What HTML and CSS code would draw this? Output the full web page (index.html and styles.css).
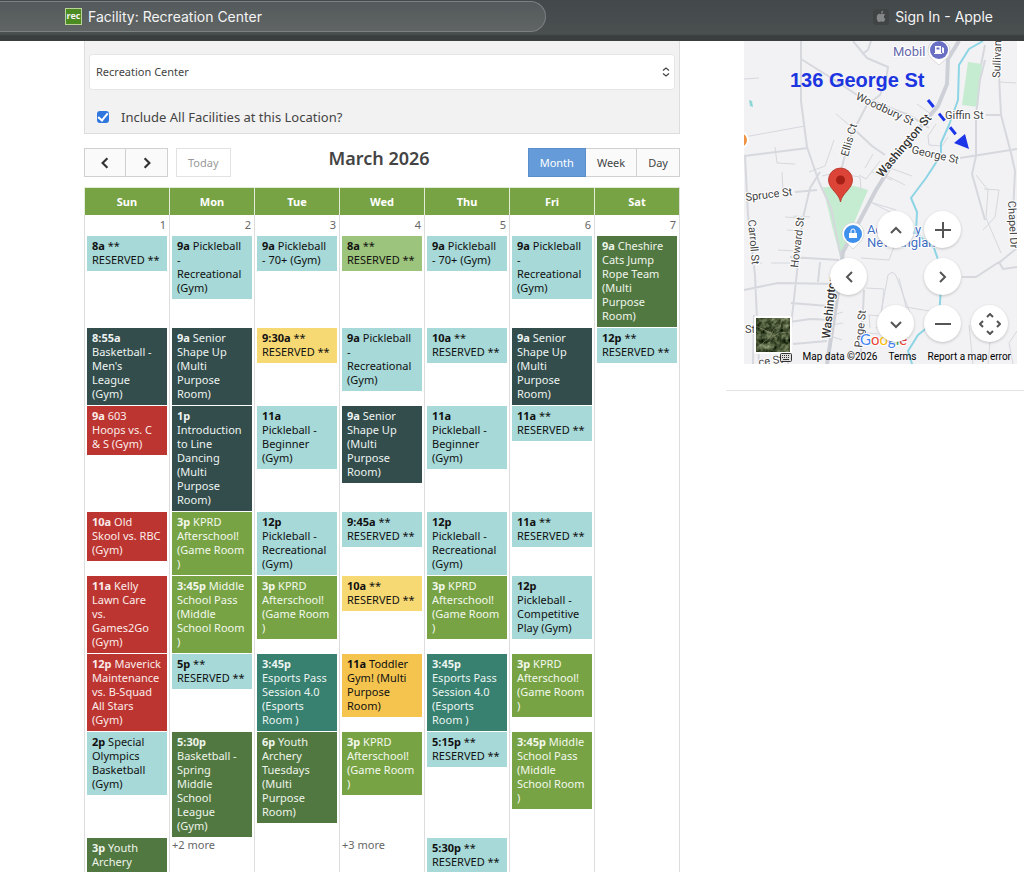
FILE: index.html
```html
<!DOCTYPE html>
<html lang="en">
<head>
<meta charset="utf-8">
<title>Facility: Recreation Center</title>
<link rel="stylesheet" href="styles.css">
</head>
<body>
<header class="browser-bar">
  <a class="tab tab-active" href="#facility"><span class="favicon">rec</span>Facility: Recreation Center</a>
  <a class="tab tab-other" href="#signin"><svg class="apple" viewBox="0 0 16 16" aria-hidden="true"><rect width="16" height="16" rx="3" fill="#414445"/><path d="M8 5.300c.7-.5 1.500-.7 2.300-.5.700.1 1.300.5 1.700 1-1.700 1.200-1.500 3.500.4 4.300-.6 1.700-1.500 2.900-2.400 2.900-.7 0-1-.4-1.900-.4s-1.200.4-1.900.4C4.800 13 3.700 10.900 3.700 8.700c0-2.500 1.300-3.900 2.700-3.900.700 0 1.200.3 1.600.5zM7.900 4.500c0-1.500 1-2.500 2.300-2.700.1 1.500-.9 2.700-2.300 2.700z" fill="#858788"/></svg>Sign In - Apple</a>
</header>
<main class="page">
  <section class="content">
    <form class="filters">
      <div class="select-box">
        <select aria-label="Facility"><option>Recreation Center</option></select>
        <svg class="updown" viewBox="0 0 8 10" aria-hidden="true"><path d="M1 3.500 4 1l3 2.500M1 6.500 4 9l3-2.500" fill="none" stroke="#444" stroke-width="1.200"/></svg>
      </div>
      <label class="include"><input type="checkbox" checked>Include All Facilities at this Location?</label>
    </form>
    <div class="toolbar">
      <div class="tools">
        <div class="group">
          <button type="button" class="btn arrow" aria-label="Previous"><svg viewBox="0 0 10 10"><path d="M7 1 3 5l4 4" fill="none" stroke="#333" stroke-width="1.800"/></svg></button>
          <button type="button" class="btn arrow" aria-label="Next"><svg viewBox="0 0 10 10"><path d="m3 1 4 4-4 4" fill="none" stroke="#333" stroke-width="1.800"/></svg></button>
        </div>
        <button type="button" class="btn today" disabled>Today</button>
      </div>
      <h2 class="title">March 2026</h2>
      <div class="group">
        <button type="button" class="btn selected">Month</button>
        <button type="button" class="btn">Week</button>
        <button type="button" class="btn">Day</button>
      </div>
    </div>
    <table class="calendar">
      <thead>
        <tr><th>Sun</th><th>Mon</th><th>Tue</th><th>Wed</th><th>Thu</th><th>Fri</th><th>Sat</th></tr>
      </thead>
      <tbody>
        <tr class="days"><td>1</td><td>2</td><td>3</td><td>4</td><td>5</td><td>6</td><td>7</td></tr>
        <tr>
          <td><a href="#e" class="event aqua"><b>8a</b> ** RESERVED **</a></td>
          <td><a href="#e" class="event aqua"><b>9a</b> Pickleball<br>-<br>Recreational (Gym)</a></td>
          <td><a href="#e" class="event aqua"><b>9a</b> Pickleball<br>- 70+ (Gym)</a></td>
          <td><a href="#e" class="event sage"><b>8a</b> ** RESERVED **</a></td>
          <td><a href="#e" class="event aqua"><b>9a</b> Pickleball<br>- 70+ (Gym)</a></td>
          <td><a href="#e" class="event aqua"><b>9a</b> Pickleball<br>-<br>Recreational (Gym)</a></td>
          <td><a href="#e" class="event forest"><b>9a</b> Cheshire Cats Jump Rope Team (Multi Purpose Room)</a></td>
        </tr>
        <tr>
          <td><a href="#e" class="event slate"><b>8:55a</b> Basketball - Men's League (Gym)</a></td>
          <td><a href="#e" class="event slate"><b>9a</b> Senior Shape Up (Multi Purpose Room)</a></td>
          <td><a href="#e" class="event yellow"><b>9:30a</b> ** RESERVED **</a></td>
          <td><a href="#e" class="event aqua"><b>9a</b> Pickleball<br>-<br>Recreational (Gym)</a></td>
          <td><a href="#e" class="event aqua"><b>10a</b> ** RESERVED **</a></td>
          <td><a href="#e" class="event slate"><b>9a</b> Senior Shape Up (Multi Purpose Room)</a></td>
          <td><a href="#e" class="event aqua"><b>12p</b> ** RESERVED **</a></td>
        </tr>
        <tr>
          <td><a href="#e" class="event red"><b>9a</b> 603<br>Hoops vs. C<br>&amp; S (Gym)</a></td>
          <td><a href="#e" class="event slate"><b>1p</b><br>Introduction to Line Dancing (Multi Purpose Room)</a></td>
          <td><a href="#e" class="event aqua"><b>11a</b><br>Pickleball - Beginner (Gym)</a></td>
          <td><a href="#e" class="event slate"><b>9a</b> Senior Shape Up (Multi Purpose Room)</a></td>
          <td><a href="#e" class="event aqua"><b>11a</b><br>Pickleball - Beginner (Gym)</a></td>
          <td><a href="#e" class="event aqua"><b>11a</b> ** RESERVED **</a></td>
          <td></td>
        </tr>
        <tr>
          <td><a href="#e" class="event red"><b>10a</b> Old Skool vs. RBC (Gym)</a></td>
          <td><a href="#e" class="event green"><b>3p</b> KPRD Afterschool! (Game Room )</a></td>
          <td><a href="#e" class="event aqua"><b>12p</b><br>Pickleball - Recreational (Gym)</a></td>
          <td><a href="#e" class="event aqua"><b>9:45a</b> ** RESERVED **</a></td>
          <td><a href="#e" class="event aqua"><b>12p</b><br>Pickleball - Recreational (Gym)</a></td>
          <td><a href="#e" class="event aqua"><b>11a</b> ** RESERVED **</a></td>
          <td></td>
        </tr>
        <tr>
          <td><a href="#e" class="event red"><b>11a</b> Kelly Lawn Care<br>vs.<br>Games2Go (Gym)</a></td>
          <td><a href="#e" class="event green"><b>3:45p</b> Middle School Pass (Middle School Room )</a></td>
          <td><a href="#e" class="event green"><b>3p</b> KPRD Afterschool! (Game Room )</a></td>
          <td><a href="#e" class="event yellow"><b>10a</b> ** RESERVED **</a></td>
          <td><a href="#e" class="event green"><b>3p</b> KPRD Afterschool! (Game Room )</a></td>
          <td><a href="#e" class="event aqua"><b>12p</b><br>Pickleball - Competitive Play (Gym)</a></td>
          <td></td>
        </tr>
        <tr>
          <td><a href="#e" class="event red"><b>12p</b> Maverick Maintenance vs. B-Squad All Stars (Gym)</a></td>
          <td><a href="#e" class="event aqua"><b>5p</b> ** RESERVED **</a></td>
          <td><a href="#e" class="event teal"><b>3:45p</b><br>Esports Pass Session 4.0 (Esports Room )</a></td>
          <td><a href="#e" class="event amber"><b>11a</b> Toddler Gym! (Multi Purpose Room)</a></td>
          <td><a href="#e" class="event teal"><b>3:45p</b><br>Esports Pass Session 4.0 (Esports Room )</a></td>
          <td><a href="#e" class="event green"><b>3p</b> KPRD Afterschool! (Game Room )</a></td>
          <td></td>
        </tr>
        <tr>
          <td><a href="#e" class="event aqua"><b>2p</b> Special Olympics Basketball (Gym)</a></td>
          <td><a href="#e" class="event forest"><b>5:30p</b> Basketball - Spring Middle School League (Gym)</a></td>
          <td><a href="#e" class="event forest"><b>6p</b> Youth Archery Tuesdays (Multi Purpose Room)</a></td>
          <td><a href="#e" class="event green"><b>3p</b> KPRD Afterschool! (Game Room )</a></td>
          <td><a href="#e" class="event aqua"><b>5:15p</b> ** RESERVED **</a></td>
          <td><a href="#e" class="event green"><b>3:45p</b> Middle School Pass (Middle School Room )</a></td>
          <td></td>
        </tr>
        <tr>
          <td><a href="#e" class="event forest"><b>3p</b> Youth Archery</a></td>
          <td><a href="#more" class="more">+2 more</a></td>
          <td></td>
          <td><a href="#more" class="more">+3 more</a></td>
          <td><a href="#e" class="event aqua"><b>5:30p</b> ** RESERVED **</a></td>
          <td></td>
          <td></td>
        </tr>
      </tbody>
    </table>
  </section>
  <aside class="side">
    <div class="map">
      <svg class="map-art" viewBox="744 41 273 323" preserveAspectRatio="xMidYMid slice" role="img" aria-label="Street map around 136 George St">
        <defs>
          <filter id="terrain" x="0" y="0" width="100%" height="100%" color-interpolation-filters="sRGB">
            <feTurbulence type="fractalNoise" baseFrequency=".18" numOctaves="4" seed="8"/>
            <feColorMatrix values=".8 .2 0 0 -.22  .8 .2 0 0 -.17  .7 .2 0 0 -.24  0 0 0 0 1"/>
          </filter>
        </defs>
        <rect x="744" y="41" width="273" height="323" fill="#f2f2f4"/>
        <g fill="#c5ecd0">
          <path d="M823 187q8 1 14-3 14 0 31 6l-28 66-8-30z"/>
          <path d="m968 62 14 2-4 43-16-2z"/>
          <path d="m749 100 3 1 1 6-3-1z" fill="#8ed7d5"/>
        </g>
        <g class="road thin">
          <path d="m744 79 15-1M744 137l61-11M775 147l2 16 18 1M834 140l-9 26-16 6M836 114l19 16M880 161l-14 18-7-4M873 154l-8 14M872 172l20 8M882 165l30 11M870 202l26 8M887 176l18 9M917 104l14 10M936 124l-8 12 1 9 13 1 6-9M976 175l12 15-2 28 15 35M984 189l15 1-4 27-12 13M1000 82l16 1M822 176l12-3 26 4 1 14M783 192l-1-20M793 216l17 1M778 250l17 1M771 263h19M755 264l7-1M868 201l24 12 2 34-5 13-28-2M866 288l18 1-3 27-12-1 1 13M881 315l22 1M881 313l7-38q6-6 9 3l13 35-34 15M899 278l7 29 29 5M860 332l18 2M833 315l10-3M832 325l11-2M830 336l12 4M969 325l4 39M990 342l-2 22M1017 331l-8 12 4 21M785 217l14 1M787 230l14 1"/>
        </g>
        <g class="road">
          <path d="M801 41v18l0 42 6 46 12 35 12 26 10 49M801 59l32 20 24 16 54 21 18 12M853 41l14 17 21 9-2 13-6 15-13 10-18 34-8 32M871 41l-3 9-6 4M855 130l17 16 13 9M744 156l64-8M745 155l3 60 7 60 4 89M820 172l-10 16-8 34-5 50-5 45-4 47M744 290l34-7 63 1M791 303l37 3M790 322l20-3 23 1M754 315l-1 49M793 344l34-3M790 257l49 3M795 192l22-2M864 290l-3 62M976 156l-4 18 13 46M960 158l57-9M985 60l-5 20-4 35v41M986 115h14M985 45l-4 20M998 41l1 34 2 40 10 38 4 18-2 42M962 277h14l23-15 4 7 14-2M1000 262l17-14M820 262l-2 20"/>
        </g>
        <path class="road-main" d="M959 41l-11 18-1 25-9 22-37 44-25 40-33 62-5 40-11 72"/>
        <path class="creek" d="m983 41-14 8-10 16-1 35-9 25-8 18v12l-15 23-15 20 6 14-1 21 18 15 8 23-3 47-21 17-10 16 4 13-4 7"/>
        <g class="street">
          <text x="855" y="99" transform="rotate(25 855 99)">Woodbury St</text>
          <text x="848" y="157" transform="rotate(-74 848 157)">Ellis Ct</text>
          <text x="945" y="119">Giffin St</text>
          <text x="911" y="153" transform="rotate(13 911 153)">George St</text>
          <text x="746" y="201" transform="rotate(-7 746 201)">Spruce St</text>
          <text x="748" y="220" transform="rotate(85 748 220)">Carroll St</text>
          <text x="798" y="268" transform="rotate(-83 798 268)">Howard St</text>
          <text x="1000" y="78" transform="rotate(-88 1000 78)">Sullivan</text>
          <text x="1008" y="201" transform="rotate(87 1008 201)">Chapel Dr</text>
          <text x="862" y="348" transform="rotate(-84 862 348)">Page St</text>
          <text x="745" y="333">St</text>
          <text x="759" y="366" transform="rotate(-8 759 366)">ce St</text>
        </g>
        <g class="street avenue">
          <text x="882" y="178" transform="rotate(-50 882 178)">Washington St</text>
          <text x="830" y="339" transform="rotate(-84 830 339)">Washington</text>
        </g>
        <g class="place">
          <text x="893" y="56" fill="#6668ab">Mobil</text>
          <text x="867" y="234">Academy Sea</text>
          <text x="867" y="247">New England</text>
        </g>
        <path d="M939 65l-7-6a11 11 0 1 1 14 0z" fill="#fff" stroke="#bbb" stroke-width=".5"/>
        <circle cx="939" cy="50" r="9" fill="#6970c4"/>
        <path d="M935 46h6v7h1v1h-8v-1h1zM936.500 47.500v2h3v-2zM942 47l2 1v5q-2 1-2-2" fill="#fff" fill-rule="evenodd"/>
        <path d="m853 249-7-7a11 11 0 1 1 14 0z" fill="#fff" stroke="#bbb" stroke-width=".5"/>
        <circle cx="853" cy="234" r="9" fill="#3f8fec"/>
        <path d="M849 233h8v5h-8z" fill="#fff"/>
        <path d="M851 233v-2a2 2 0 0 1 4 0v2" fill="none" stroke="#fff"/>
        <circle cx="740" cy="140" r="8" fill="#ee9346" stroke="#fff" stroke-width="2"/>
        <path d="M840.500 202c-1.500-9-12-13-12-22a12 12 0 0 1 24 0c0 9-10.500 13-12 22z" fill="#db4437" stroke="#b33126" stroke-width=".8"/>
        <circle cx="840.500" cy="180" r="4.500" fill="#a51f17"/>
        <text class="callout" x="790" y="87">136 George St</text>
        <path d="m928 100 34 42" stroke="#1c35e8" stroke-width="3" stroke-dasharray="9 8.500"/>
        <path d="m969 149-15-6 11-9z" fill="#1c35e8"/>
        <text class="logo" x="860" y="345"><tspan fill="#4285f4">G</tspan><tspan fill="#ea4335">o</tspan><tspan fill="#fbbc05">o</tspan><tspan fill="#4285f4">g</tspan><tspan fill="#34a853">l</tspan><tspan fill="#ea4335">e</tspan></text>
        <rect x="754" y="316" width="38" height="38" rx="2" fill="#fff"/>
        <rect x="756" y="318" width="34" height="34" filter="url(#terrain)"/>
        <path d="m757 348 12-10 5-9 6-2 2-8M770 338l9-5 10-1M756 326l15 7" fill="none" stroke="#b9b79d" stroke-width=".8" opacity=".5"/>
      </svg>
      <div class="map-controls">
        <button type="button" class="round up" aria-label="Move up"><svg viewBox="0 0 18 18"><path d="m4 12 5-5 5 5"/></svg></button>
        <button type="button" class="round plus" aria-label="Zoom in"><svg viewBox="0 0 18 18"><path d="M9 1v16M1 9h16"/></svg></button>
        <button type="button" class="round left" aria-label="Move left"><svg viewBox="0 0 18 18"><path d="M12 4 7 9l5 5"/></svg></button>
        <button type="button" class="round right" aria-label="Move right"><svg viewBox="0 0 18 18"><path d="m6 4 5 5-5 5"/></svg></button>
        <button type="button" class="round down" aria-label="Move down"><svg viewBox="0 0 18 18"><path d="m4 7 5 5 5-5"/></svg></button>
        <button type="button" class="round minus" aria-label="Zoom out"><svg viewBox="0 0 18 18"><path d="M1 9h16"/></svg></button>
        <button type="button" class="round pan" aria-label="Map camera controls"><svg class="wide" viewBox="0 0 22 22"><path d="m8 4 3-3 3 3M8 18l3 3 3-3M4 8l-3 3 3 3M18 8l3 3-3 3"/></svg></button>
      </div>
      <div class="credits">
        <svg class="keyboard" viewBox="0 0 12 9" aria-hidden="true"><rect x=".5" y=".5" width="11" height="8" rx="1" fill="#ddd" stroke="#333"/><path d="M2 2.500h8M2 4.500h8" stroke="#333" stroke-dasharray="1 1"/><path d="M3 6.500h6" stroke="#333"/></svg>
        <span>Map data ©2026</span><a href="#terms">Terms</a><a href="#report">Report a map error</a>
      </div>
    </div>
  </aside>
</main>
</body>
</html>
```
FILE: styles.css
```css
* { box-sizing: border-box; }

body {
  margin: 0;
  height: 100vh;
  overflow: hidden;
  display: flex;
  flex-direction: column;
  background: #fff;
  color: #444;
  font-family: "Noto Sans", "Open Sans", sans-serif;
}

a { color: inherit; text-decoration: none; }
button, select { font-family: inherit; color: inherit; }

.browser-bar {
  flex: none;
  height: 41px;
  display: flex;
  justify-content: space-between;
  align-items: flex-start;
  padding-right: 31px;
  background: linear-gradient(#43494b, #4a4f50 34px, #3b3e3f 36px, #3b3e3f);
  color: #f4f4f4;
  font: 14px/20px Inter, sans-serif;
}
.tab { display: flex; align-items: center; gap: 6px; }
.tab-active {
  width: 546px;
  height: 31px;
  margin-top: 1px;
  padding-left: 65px;
  border: 1px solid #7c8182;
  border-left: 0;
  border-radius: 0 16px 16px 0;
  background: linear-gradient(#545a5c, #606464);
}
.tab-other { height: 33px; }
.favicon {
  width: 17px;
  height: 17px;
  border: 1px solid #b9d399;
  background: #4c8a22;
  font: bold 9px/13px "Open Sans", sans-serif;
  text-align: center;
}
.apple { width: 16px; height: 16px; }

.page {
  flex: 1;
  min-height: 0;
  display: grid;
  grid-template-columns: 2fr 1fr;
  align-items: start;
  column-gap: 46px;
  padding-left: 84px;
}

.filters {
  padding: 13px 4px 6px;
  border: 1px solid #ddd;
  border-top: 0;
  background: #f2f2f2;
}
.select-box { position: relative; }
.select-box select {
  display: block;
  appearance: none;
  width: 100%;
  height: 36px;
  padding: 0 6px 2px;
  border: 1px solid #e6e6e6;
  border-radius: 3px;
  background: #fff;
  font-size: 11px;
}
.updown {
  position: absolute;
  right: 5px;
  top: 13px;
  width: 8px;
  height: 10px;
}
.include {
  display: flex;
  align-items: center;
  gap: 12px;
  margin-top: 17px;
  padding-left: 8px;
  font-size: 13px;
  line-height: 20px;
}
.include input {
  appearance: none;
  display: grid;
  place-items: center;
  width: 12px;
  height: 12px;
  margin: 0;
  border-radius: 3px;
  background: #2f76de;
}
.include input:not(:checked) { background: #fff; border: 1px solid #999; }
.include input:checked::after {
  content: "";
  width: 4px;
  height: 8px;
  margin-bottom: 2px;
  border: solid #fff;
  border-width: 0 2px 2px 0;
  transform: rotate(40deg);
}

.toolbar {
  display: flex;
  justify-content: space-between;
  margin: 14px 0 10px;
}
.tools { display: flex; gap: 8px; }
.group { display: flex; }
.group .btn + .btn { border-left: 0; }
.btn {
  height: 29px;
  padding: 0 11px;
  border: 1px solid #d0d0d0;
  background: #fafafa;
  font-size: 11px;
}
.arrow { width: 42px; }
.arrow svg { width: 12px; height: 12px; display: block; margin: auto; }
.today { background: #fff; border-color: #e2e2e2; color: #999; }
.selected { border-color: #5a8fcb; background: #659bd8; color: #fff; }
.title { margin: 0; font-size: 18px; line-height: 20px; font-weight: 600; }

.calendar {
  width: 100%;
  table-layout: fixed;
  border-collapse: separate;
  border-spacing: 0;
  border-right: 1px solid #ddd;
}
.calendar th {
  height: 28px;
  padding: 0;
  border: solid #e3ecd9;
  border-width: 1px 0 0 1px;
  background: #77a345;
  color: #fff;
  font-size: 11px;
}
.calendar td {
  padding: 0 2px 1px;
  border-left: 1px solid #ddd;
  vertical-align: top;
}
.calendar .days td {
  height: 21px;
  padding: 1px 3px 0 0;
  font-size: 11px;
  line-height: 18px;
  text-align: right;
  color: #666;
}
.event {
  display: block;
  padding: 3px 4px 4px 5px;
  font-size: 11px;
  line-height: 14px;
}
.more { font-size: 11px; line-height: 14px; display: block; color: #666; }
.aqua { background: #a6d9d8; color: #111; }
.sage { background: #9dc47c; color: #111; }
.yellow { background: #f7d973; color: #111; }
.amber { background: #f4c44f; color: #111; }
.slate { background: #324d4b; color: #eef3f2; }
.forest { background: #527842; color: #eef5ea; }
.green { background: #77a345; color: #f3f8ec; }
.teal { background: #38806f; color: #eaf5f2; }
.red { background: #bd3530; color: #faecea; }

.side {
  padding: 0 7px 26px 18px;
  border-bottom: 1px solid #e4e4e4;
}
.map { position: relative; height: 323px; overflow: hidden; }
.map-art { display: block; width: 100%; height: 100%; }
.map-art text { font-family: Roboto, sans-serif; }
.road, .road-main, .creek { fill: none; stroke-linejoin: round; }
.road { stroke: #d6d8de; stroke-width: 2; }
.thin { stroke-width: 1; }
.road-main { stroke: #cdd0d6; stroke-width: 4; }
.creek { stroke: #8dd5e5; stroke-width: 2; }
.street { font-size: 11px; fill: #444; stroke: #fff; stroke-width: 2; paint-order: stroke; }
.avenue { font-size: 12px; font-weight: 500; fill: #333; }
.place { font-size: 13px; fill: #3f6fc4; stroke: #fff; stroke-width: 2; paint-order: stroke; }
.map-art .callout { font: bold 20px "Liberation Sans", Arial, sans-serif; fill: #1c35e0; }
.map-art .logo { font: 15px Lato, sans-serif; stroke: #fff; stroke-width: 2; paint-order: stroke; }

.map-controls {
  position: absolute;
  right: 9px;
  bottom: 22px;
  display: grid;
  grid-template: repeat(3, 37px) / repeat(4, 37px);
  gap: 10px;
}
.round {
  display: grid;
  place-items: center;
  padding: 0;
  border: 0;
  border-radius: 50%;
  background: #fff;
  box-shadow: 0 1px 3px #0003;
}
.round svg { width: 18px; height: 18px; fill: none; stroke: #555; stroke-width: 2; }
.round .wide { width: 22px; height: 22px; }
.up { grid-area: 1 / 2; }
.plus { grid-area: 1 / 3; }
.left { grid-area: 2 / 1; }
.right { grid-area: 2 / 3; }
.down { grid-area: 3 / 2; }
.minus { grid-area: 3 / 3; }
.pan { grid-area: 3 / 4; }
.credits {
  position: absolute;
  right: 6px;
  bottom: 0;
  display: flex;
  align-items: center;
  gap: 11px;
  color: #000;
  font: 10px/14px Roboto, sans-serif;
}
.keyboard { width: 12px; height: 9px; }
```
